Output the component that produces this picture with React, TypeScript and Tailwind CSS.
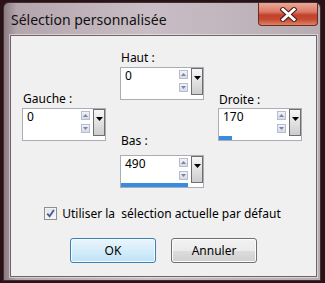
import React from 'react';

function SpinButton({ up }: { up?: boolean }) {
  return (
    <div className="flex h-[9px] w-[9px] items-center justify-center border border-[#b7bdcb] bg-gradient-to-b from-[#f1f3f8] to-[#d6dae6]">
      <svg width="5" height="3" viewBox="0 0 5 3">
        {up ? <path d="M0 3 L2.5 0 L5 3 Z" fill="#7a84a8" /> : <path d="M0 0 L5 0 L2.5 3 Z" fill="#7a84a8" />}
      </svg>
    </div>
  );
}

function SpinField({ value, bar = 0 }: { value: string; bar?: number }) {
  return (
    <div className="flex h-[33px] w-[84px] flex-col border border-[#a9adb5] bg-white">
      <div className="flex h-[27px]">
        <div className="flex-1 pl-[4px] text-[12px] leading-[15px] text-black">{value}</div>
        <div className="flex w-[9px] flex-col gap-[4px] pt-[2px]">
          <SpinButton up />
          <SpinButton />
        </div>
        <div className="ml-[3px] flex h-[27px] w-[12px] justify-center border border-[#6e6e6e] bg-gradient-to-b from-[#f6f6f6] to-[#cdcdcd]">
          <svg width="7" height="4" viewBox="0 0 7 4" className="mt-[7px]">
            <path d="M0 0 L7 0 L3.5 4 Z" fill="#000" />
          </svg>
        </div>
      </div>
      <div className="h-[4px]">
        {bar > 0 && <div className="h-full bg-[#3a8be0]" style={{ width: bar }} />}
      </div>
    </div>
  );
}

export default function App() {
  return (
    <div className="h-[283px] w-[325px] overflow-hidden bg-[#2a1217] pl-[3px] pt-[2px] font-['Noto_Sans',sans-serif]">
      {/* Window frame */}
      <div className="flex h-[279px] w-[318px] flex-col rounded-t-[6px] border border-[#3e3136] bg-[linear-gradient(90deg,#7e6c74_0%,#a89820_0%,#8c7b83_0%,#b4a5ad_4%,#c9bec5_45%,#b8acb3_100%)]">
        {/* Title bar */}
        <div className="flex h-[32px] items-start justify-between">
          <span className="pl-[7px] pt-[8px] text-[14px] leading-[18px] text-[#111]">Sélection personnalisée</span>
          <div className="mr-[2px] flex h-[23px] w-[60px] items-center justify-center rounded-b-[4px] border border-t-0 border-[#6b2a22] bg-[linear-gradient(180deg,#eba898_0%,#d97a66_40%,#c1412a_55%,#c64a33_75%,#de8466_100%)]">
            <svg width="17" height="15" viewBox="0 0 17 15">
              <path d="M3 2.5 L14 12.5 M14 2.5 L3 12.5" stroke="#4a1b16" strokeWidth="5" strokeLinecap="square" />
              <path d="M3 2.5 L14 12.5 M14 2.5 L3 12.5" stroke="#ffffff" strokeWidth="3" strokeLinecap="square" />
            </svg>
          </div>
        </div>

        {/* Client area */}
        <div className="ml-[6px] mr-[3px] flex h-[242px] flex-col border border-[#6e6469] bg-[#f0f0f0] text-[12px] leading-[15px] text-black shadow-[0_0_0_1px_rgba(255,255,255,0.45)]">
          <div className="flex gap-x-[14px] px-[11px]">
            <div className="pt-[55px]">
              <div className="mb-[2px] h-[15px] pl-[1px]">Gauche :</div>
              <SpinField value="0" />
            </div>
            <div className="pt-[14px]">
              <div className="mb-[2px] h-[15px] pl-[1px]">Haut :</div>
              <SpinField value="0" />
              <div className="mb-[7px] mt-[33px] h-[15px] pl-[1px]">Bas :</div>
              <SpinField value="490" bar={67} />
            </div>
            <div className="pt-[56px]">
              <div className="mb-[1px] h-[15px] pl-[1px]">Droite :</div>
              <SpinField value="170" bar={13} />
            </div>
          </div>

          <div className="mt-[18px] flex items-center justify-center gap-[5px] pr-[2px]">
            <div className="flex h-[13px] w-[13px] items-center justify-center border border-[#8e8f8f] bg-gradient-to-b from-[#dfe3ea] to-[#f8f9fb] shadow-[inset_0_0_0_1px_#f4f4f4]">
              <svg width="9" height="9" viewBox="0 0 9 9">
                <path d="M1.2 4.6 L3.6 7.2 L7.9 1" stroke="#4a5f8f" strokeWidth="1.9" fill="none" />
              </svg>
            </div>
            <span className="whitespace-pre">Utiliser la  sélection actuelle par défaut</span>
          </div>

          <div className="mt-[17px] flex justify-center gap-[15px]">
            <button className="h-[25px] w-[86px] rounded-[3px] border border-[#3c7fb1] bg-gradient-to-b from-[#eaf6fd] to-[#bfe3f7] text-[12px] shadow-[inset_0_0_0_1px_#f4fbff]">
              OK
            </button>
            <button className="h-[25px] w-[86px] rounded-[3px] border border-[#707070] bg-[linear-gradient(180deg,#f2f2f2_0%,#ebebeb_50%,#dddddd_51%,#cfcfcf_100%)] text-[12px] shadow-[inset_0_0_0_1px_#fcfcfc]">
              Annuler
            </button>
          </div>
        </div>
      </div>
    </div>
  );
}
